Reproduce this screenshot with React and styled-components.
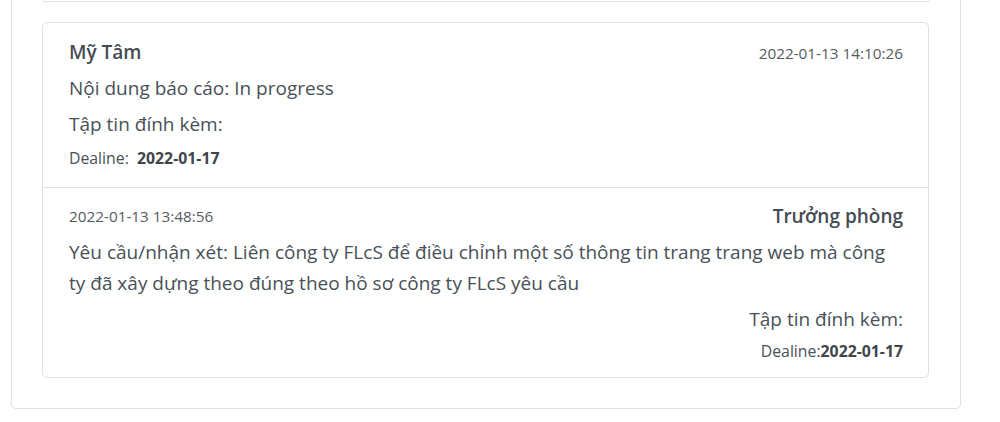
import React from 'react';
import styled, { createGlobalStyle } from 'styled-components';

const GlobalStyle = createGlobalStyle`
  body {
    margin: 0;
    background: #fff;
    font-family: 'Open Sans', 'Noto Sans', sans-serif;
    color: #495057;
  }
`;

const Page = styled.div`
  padding: 0 39px 0 11px;
`;

const Panel = styled.div`
  border: 1px solid #e0e0e0;
  border-top: none;
  border-radius: 0 0 5px 5px;
  padding: 0 31px 30px 30px;
`;

const PrevTail = styled.div`
  height: 1px;
  margin-left: 1px;
  border: 1px solid #e0e0e0;
  border-top: none;
  border-radius: 0 0 5px 5px;
  margin-bottom: 20px;
`;

const Card = styled.div`
  border: 1px solid #e0e0e0;
  border-radius: 5px;
`;

const Section = styled.div`
  padding: ${(p) => p.pad || '16px 25px 16px 26px'};
  & + & {
    border-top: 1px solid #e3e3e3;
  }
`;

const Head = styled.div`
  display: flex;
  justify-content: space-between;
  align-items: ${(p) => p.align || 'baseline'};
  margin-bottom: 8px;
`;

const Name = styled.span`
  font-size: 19px;
  font-weight: 600;
  color: #444b52;
`;

const Stamp = styled.span`
  font-size: 15.3px;
  color: #555b61;
`;

const Line = styled.p`
  margin: 0;
  font-size: 19px;
  line-height: 31px;
  text-align: ${(p) => (p.right ? 'right' : 'left')};
  margin-bottom: ${(p) => p.mb || '5px'};
`;

const Deadline = styled.div`
  font-size: 15.8px;
  color: #495057;
  text-align: ${(p) => (p.right ? 'right' : 'left')};
  b {
    font-weight: 700;
    color: #3f454b;
  }
`;

const App = () => (
  <>
    <GlobalStyle />
    <Page>
      <Panel>
        <PrevTail />
        <Card>
          <Section pad="16px 25px 18px 26px">
            <Head>
              <Name>Mỹ Tâm</Name>
              <Stamp>2022-01-13 14:10:26</Stamp>
            </Head>
            <Line>Nội dung báo cáo: In progress</Line>
            <Line mb="7px">Tập tin đính kèm:</Line>
            <Deadline>
              Dealine:&nbsp; <b>2022-01-17</b>
            </Deadline>
          </Section>
          <Section pad="15px 25px 15px 26px">
            <Head align="center">
              <Stamp>2022-01-13 13:48:56</Stamp>
              <Name>Trưởng phòng</Name>
            </Head>
            <Line>
              Yêu cầu/nhận xét: Liên công ty FLcS để điều chỉnh một số thông tin trang trang web mà công ty đã
              xây dựng theo đúng theo hồ sơ công ty FLcS yêu cầu
            </Line>
            <Line right>Tập tin đính kèm:</Line>
            <Deadline right>
              Dealine:<b>2022-01-17</b>
            </Deadline>
          </Section>
        </Card>
      </Panel>
    </Page>
  </>
);

export default App;
